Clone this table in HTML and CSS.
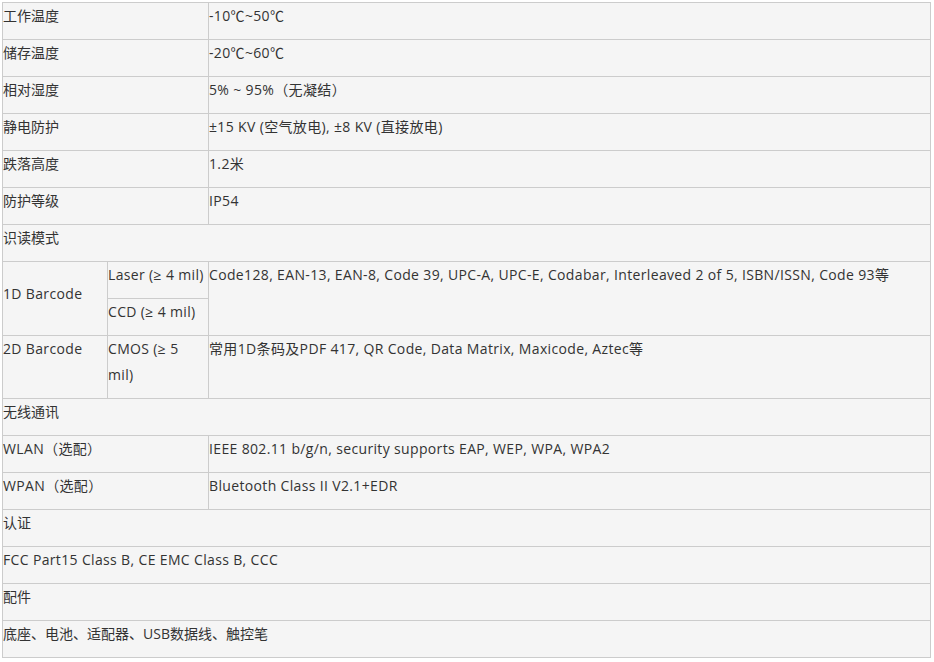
FILE: index.html
```html
<!DOCTYPE html>
<html lang="zh-CN">
<head>
<meta charset="utf-8">
<link rel="stylesheet" href="styles.css">
</head>
<body>
<div class="wrap">
<table class="spec">
  <colgroup>
    <col class="c1">
    <col class="c2">
    <col class="c3">
  </colgroup>
  <tbody>
    <tr><td colspan="2" class="zh">工作温度</td><td>-10℃~50℃</td></tr>
    <tr><td colspan="2" class="zh">储存温度</td><td>-20℃~60℃</td></tr>
    <tr><td colspan="2" class="zh">相对湿度</td><td>5% ~ 95%（无凝结）</td></tr>
    <tr><td colspan="2" class="zh">静电防护</td><td>±15 KV (空气放电), ±8 KV (直接放电)</td></tr>
    <tr><td colspan="2" class="zh">跌落高度</td><td>1.2米</td></tr>
    <tr><td colspan="2" class="zh">防护等级</td><td>IP54</td></tr>
    <tr><td colspan="3" class="zh">识读模式</td></tr>
    <tr><td rowspan="2" class="mid">1D Barcode</td><td>Laser (≥ 4 mil)</td><td rowspan="2">Code128, EAN-13, EAN-8, Code 39, UPC-A, UPC-E, Codabar, Interleaved 2 of 5, ISBN/ISSN, Code 93等</td></tr>
    <tr><td>CCD (≥ 4 mil)</td></tr>
    <tr><td>2D Barcode</td><td>CMOS (≥ 5 mil)</td><td>常用1D条码及PDF 417, QR Code, Data Matrix, Maxicode, Aztec等</td></tr>
    <tr><td colspan="3" class="zh">无线通讯</td></tr>
    <tr><td colspan="2">WLAN（选配）</td><td>IEEE 802.11 b/g/n, security supports EAP, WEP, WPA, WPA2</td></tr>
    <tr><td colspan="2">WPAN（选配）</td><td>Bluetooth Class II V2.1+EDR</td></tr>
    <tr><td colspan="3" class="zh">认证</td></tr>
    <tr><td colspan="3">FCC Part15 Class B, CE EMC Class B, CCC</td></tr>
    <tr><td colspan="3" class="zh">配件</td></tr>
    <tr><td colspan="3" class="zh">底座、电池、适配器、USB数据线、触控笔</td></tr>
  </tbody>
</table>
</div>
</body>
</html>
```
FILE: styles.css
```css
html, body {
  margin: 0;
  padding: 0;
  background: #ffffff;
}
.wrap {
  padding: 2px 0 0 2px;
}
.spec {
  border-collapse: collapse;
  table-layout: fixed;
  width: 928px;
  background: #f5f5f5;
  font-family: "Open Sans", "Noto Sans CJK SC", sans-serif;
  font-size: 14px;
  line-height: 26px;
  color: #333333;
}
.c1 { width: 105px; }
.c2 { width: 101px; }
.c3 { width: 722px; }
.spec td {
  border: 1px solid #cccccc;
  padding: 0 0 10px 0;
  vertical-align: top;
  text-align: left;
  word-wrap: break-word;
  letter-spacing: 0.35px;
}
.spec td.zh {
  letter-spacing: 0;
}
.spec td.mid {
  vertical-align: middle;
}
```
